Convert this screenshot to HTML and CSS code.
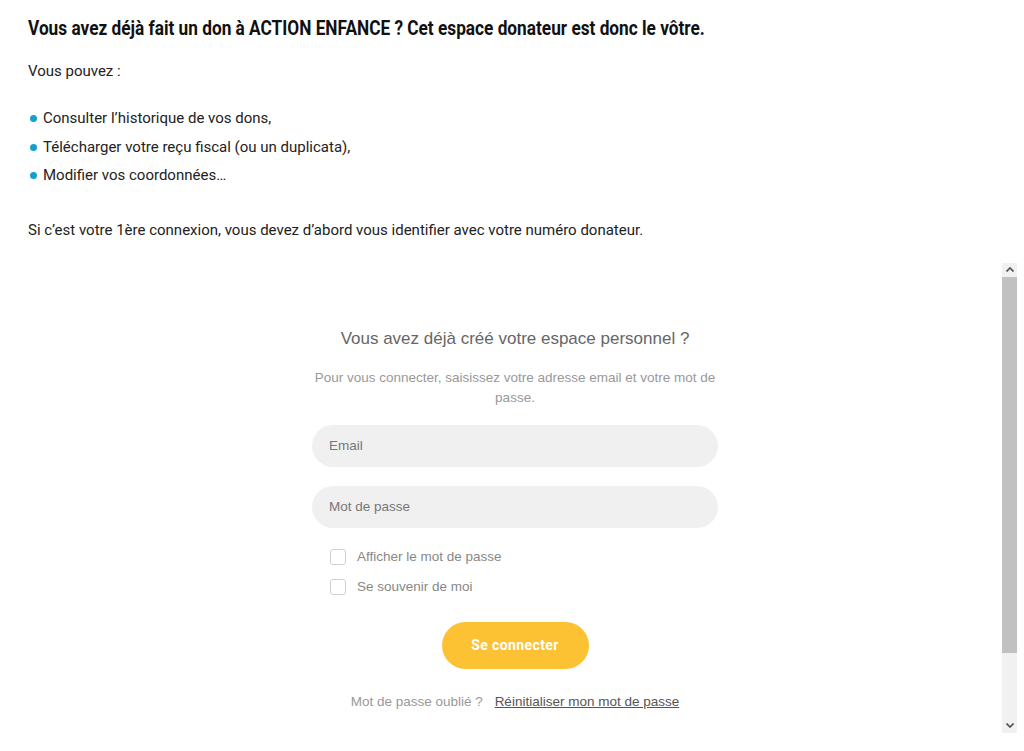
FILE: index.html
```html
<!DOCTYPE html>
<html lang="fr">
<head>
  <meta charset="UTF-8">
  <meta name="viewport" content="width=device-width, initial-scale=1.0">
  <title>Espace donateur - Action Enfance</title>
  <link rel="stylesheet" href="styles.css">
</head>
<body>
  <div class="page">
    <h2 class="intro-title"><span>Vous avez déjà fait un don à ACTION ENFANCE ? Cet espace donateur est donc le vôtre.</span></h2>
    <p class="intro-text">Vous pouvez :</p>
    <ul class="intro-list">
      <li>Consulter l’historique de vos dons,</li>
      <li>Télécharger votre reçu fiscal (ou un duplicata),</li>
      <li>Modifier vos coordonnées…</li>
    </ul>
    <p class="intro-text last">Si c’est votre 1ère connexion, vous devez d’abord vous identifier avec votre numéro donateur.</p>

    <div class="login-frame">
      <div class="login-view">
        <form class="login" onsubmit="return false">
          <h3>Vous avez déjà créé votre espace personnel ?</h3>
          <p class="login-help">Pour vous connecter, saisissez votre adresse email et votre mot de passe.</p>
          <input type="email" class="field" placeholder="Email">
          <input type="password" class="field" placeholder="Mot de passe">
          <div class="checks">
            <label class="check"><input type="checkbox"><span class="box"></span>Afficher le mot de passe</label>
            <label class="check"><input type="checkbox"><span class="box"></span>Se souvenir de moi</label>
          </div>
          <button type="submit" class="btn-login">Se connecter</button>
          <p class="forgot">Mot de passe oublié ? <a href="#">Réinitialiser mon mot de passe</a></p>
        </form>
      </div>
      <div class="scrollbar">
        <div class="sb-btn">
          <svg width="8" height="5" viewBox="0 0 8 5"><path d="M0.5 4.5 L4 1 L7.5 4.5" fill="none" stroke="#505050" stroke-width="1.6"/></svg>
        </div>
        <div class="sb-thumb"></div>
        <div class="sb-rest"></div>
        <div class="sb-btn">
          <svg width="8" height="5" viewBox="0 0 8 5"><path d="M0.5 0.5 L4 4 L7.5 0.5" fill="none" stroke="#505050" stroke-width="1.6"/></svg>
        </div>
      </div>
    </div>
  </div>
</body>
</html>
```

FILE: styles.css
```css
body {
  margin: 0;
  padding: 0;
  background: white;
  font-family: Roboto, "Liberation Sans", sans-serif;
  color: #222;
}
.page {
  padding: 16px 7px 0 28px;
}
.intro-title {
  font-family: Roboto, "Liberation Sans", sans-serif;
  font-weight: bold;
  font-size: 21px;
  line-height: 24px;
  color: #111;
  margin: 0 0 21px;
  white-space: nowrap;
}
.intro-title span {
  display: inline-block;
  transform: scaleX(0.821);
  transform-origin: left center;
}
.intro-text {
  font-size: 15px;
  line-height: 20px;
  margin: 0;
}
.intro-text.last {
  margin-top: 34.5px;
}
.intro-list {
  list-style: none;
  padding: 0;
  margin: 27px 0 0;
}
.intro-list li {
  font-size: 15px;
  line-height: 20px;
  margin-bottom: 8.5px;
  padding-left: 15px;
  position: relative;
}
.intro-list li::before {
  content: "";
  position: absolute;
  left: 2px;
  top: 7px;
  width: 7px;
  height: 7px;
  border-radius: 50%;
  background: #14a0cf;
}
.login-frame {
  margin-top: 23px;
  height: 470px;
  display: flex;
}
.login-view {
  flex: 1;
  overflow: hidden;
}
.login {
  width: 406px;
  margin: 0 auto;
  padding: 65px 0 104px;
  font-family: Arial, "Liberation Sans", sans-serif;
  text-align: center;
}
.login h3 {
  font-weight: normal;
  font-size: 17px;
  line-height: 22px;
  color: #666;
  margin: 0 0 18px;
}
.login-help {
  font-size: 13.5px;
  line-height: 20px;
  color: #999;
  margin: 0 0 17px;
}
.field {
  display: block;
  box-sizing: border-box;
  width: 100%;
  height: 42px;
  border: none;
  border-radius: 21px;
  background: #f0f0f0;
  padding: 0 17px;
  font-family: inherit;
  font-size: 13.5px;
  color: #444;
  outline: none;
}
.field::placeholder {
  color: #777;
}
.field + .field {
  margin-top: 19px;
}
.checks {
  margin-top: 14px;
  padding-left: 18px;
  text-align: left;
}
.check {
  display: flex;
  align-items: center;
  height: 30px;
  font-size: 13.5px;
  color: #888;
  cursor: pointer;
}
.check input {
  display: none;
}
.check .box {
  width: 14px;
  height: 14px;
  border: 1px solid #d0d0d0;
  border-radius: 3px;
  margin-right: 11px;
  background: white;
}
.btn-login {
  margin-top: 20px;
  width: 147px;
  height: 47px;
  border: none;
  border-radius: 24px;
  background: #fdc134;
  color: white;
  font-family: Roboto, Arial, sans-serif;
  font-weight: bold;
  font-size: 14px;
  letter-spacing: 0.4px;
  cursor: pointer;
}
.forgot {
  margin: 23px 0 0;
  font-size: 13.5px;
  line-height: 20px;
  color: #999;
}
.forgot a {
  color: #555;
  margin-left: 8px;
}
.scrollbar {
  width: 15px;
  background: #f1f1f1;
  display: flex;
  flex-direction: column;
}
.sb-btn {
  height: 14px;
  display: flex;
  align-items: center;
  justify-content: center;
}
.sb-thumb {
  height: 376px;
  background: #c1c1c1;
}
.sb-rest {
  flex: 1;
}
```
